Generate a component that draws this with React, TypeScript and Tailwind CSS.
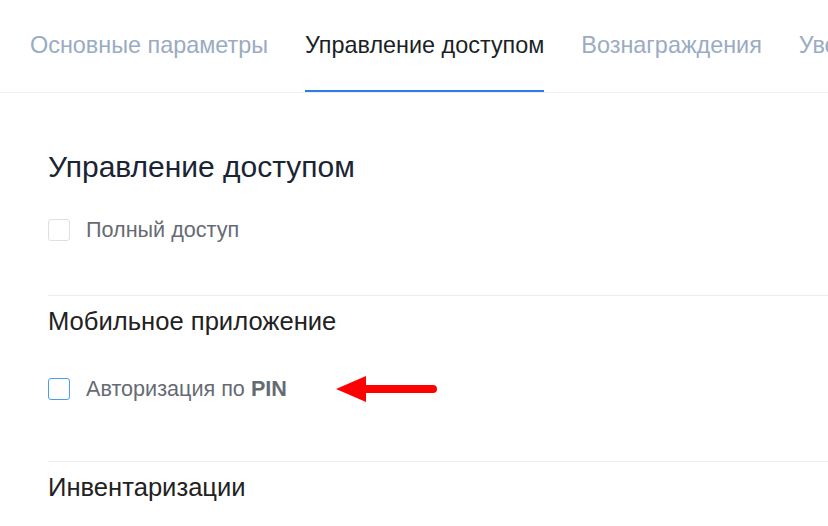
import React from "react";

export default function App() {
  const tabs = ["Основные параметры", "Управление доступом", "Вознаграждения", "Уведомления"];
  return (
    <div className="w-[828px] h-[526px] overflow-hidden bg-white" style={{ fontFamily: '"Liberation Sans", Arial, sans-serif' }}>
      <div className="flex h-[93px] border-b border-[#eef0f4] pl-[30px] gap-[37px] whitespace-nowrap overflow-hidden">
        {tabs.map((t, i) => (
          <div
            key={t}
            className={
              "flex items-center h-full pt-[1px] text-[23.4px] shrink-0 " +
              (i === 1 ? "text-[#1b1f27] border-b-2 border-[#2b7de9]" : "text-[#9aabc4] border-b-2 border-transparent")
            }
          >
            {t}
          </div>
        ))}
      </div>
      <div className="pl-[48px]">
        <div className="pt-[54px] text-[30px] text-[#1a2433] leading-[40px]">Управление доступом</div>
        <label className="flex items-center mt-[31px] gap-[16px] h-[24px]">
          <span className="w-[22px] h-[22px] rounded-[3px] border border-[#dcdfe6] bg-white" />
          <span className="text-[21.6px] text-[#666b73] leading-[24px]">Полный доступ</span>
        </label>
        <div className="mt-[53px] border-t border-[#eaecf0]" />
        <div className="pt-[9px] text-[25.6px] text-[#222] leading-[32px]">Мобильное приложение</div>
        <div className="flex items-center mt-[35px] gap-[16px] h-[34px]">
          <span className="w-[22px] h-[22px] rounded-[3px] border border-[#4a9bf5] bg-white" />
          <span className="text-[21.6px] text-[#666b73]">
            Авторизация по <b className="font-bold">PIN</b>
          </span>
          <svg width="102" height="30" viewBox="0 0 102 30" className="ml-[33px]">
            <line x1="26" y1="15" x2="97" y2="15" stroke="#ff0000" strokeWidth="8" strokeLinecap="round" />
            <polygon points="0,15 30,2 30,28" fill="#ff0000" />
          </svg>
        </div>
        <div className="mt-[55px] border-t border-[#eaecf0]" />
        <div className="pt-[9px] text-[25.6px] text-[#222] leading-[32px]">Инвентаризации</div>
      </div>
    </div>
  );
}
